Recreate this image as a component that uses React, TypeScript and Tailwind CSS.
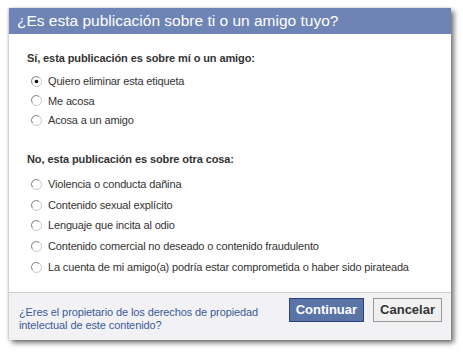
import React from "react";

const font = { fontFamily: '"Liberation Sans", Arial, sans-serif' };

function Radio({ checked }: { checked?: boolean }) {
  return (
    <svg width="11" height="11" viewBox="0 0 12 12" className="shrink-0">
      <circle cx="6" cy="6" r="5.5" fill="#fff" stroke="#c6c2b8" />
      <path d="M1.5 8.5 A5 5 0 0 1 8.5 1.5" fill="none" stroke="#8a8780" strokeWidth="1" />
      {checked && <circle cx="6" cy="6" r="2" fill="#111" />}
    </svg>
  );
}

function Option({ label, checked, tall }: { label: string; checked?: boolean; tall?: boolean }) {
  return (
    <label
      className={`flex items-center gap-[6px] pl-[4px] text-[11px] tracking-[-0.15px] text-[#333] ${
        tall ? "h-[20.7px]" : "h-[19.5px]"
      }`}
    >
      <Radio checked={checked} />
      <span>{label}</span>
    </label>
  );
}

export default function App() {
  const mine = ["Quiero eliminar esta etiqueta", "Me acosa", "Acosa a un amigo"];
  const other = [
    "Violencia o conducta dañina",
    "Contenido sexual explícito",
    "Lenguaje que incita al odio",
    "Contenido comercial no deseado o contenido fraudulento",
    "La cuenta de mi amigo(a) podría estar comprometida o haber sido pirateada",
  ];
  return (
    <div className="h-[355px] w-[463px] bg-white pl-[9px] pt-[8px]" style={font}>
      <div className="flex h-[332px] w-[442px] flex-col bg-white shadow-[3px_3px_5px_rgba(0,0,0,0.55),-1px_0_2px_rgba(0,0,0,0.2)]">
        <div className="flex h-[26px] items-center bg-[#6d84b4] px-[8px] text-[15.5px] text-white">
          ¿Es esta publicación sobre ti o un amigo tuyo?
        </div>
        <div className="flex-1 px-[18px] pt-[16px]">
          <div className="mb-[5px] text-[11px] font-bold tracking-[-0.1px] text-[#333]">
            Sí, esta publicación es sobre mí o un amigo:
          </div>
          {mine.map((m, i) => (
            <Option key={m} label={m} checked={i === 0} />
          ))}
          <div className="mb-[6.5px] mt-[21px] text-[11px] font-bold tracking-[-0.1px] text-[#333]">
            No, esta publicación es sobre otra cosa:
          </div>
          {other.map((m) => (
            <Option key={m} label={m} tall />
          ))}
        </div>
        <div className="flex h-[48px] items-start justify-between border-t border-[#ccc] bg-[#f2f2f5] pl-[10px] pr-[9px]">
          <a className="mt-[13px] w-[250px] text-[11px] leading-[13px] tracking-[-0.1px] text-[#3b5998]" href="#">
            ¿Eres el propietario de los derechos de propiedad intelectual de este contenido?
          </a>
          <div className="mt-[5px] flex gap-[9px]">
            <button className="h-[24px] border border-[#29447e] bg-[#5b74a8] px-[6px] text-[13px] font-bold text-white">
              Continuar
            </button>
            <button className="h-[24px] border border-[#999] bg-[#f0f0f0] px-[6px] text-[13px] font-bold text-[#333]">
              Cancelar
            </button>
          </div>
        </div>
      </div>
    </div>
  );
}
